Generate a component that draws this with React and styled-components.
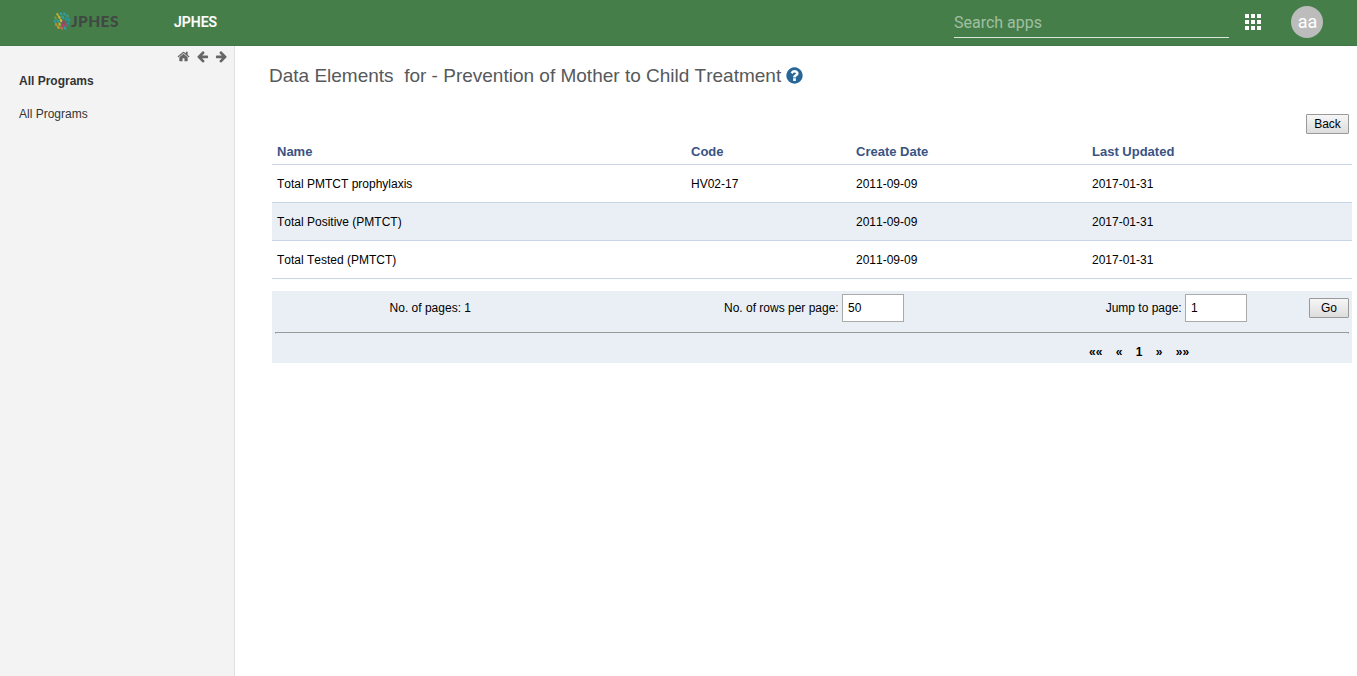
import React from 'react';
import styled, { createGlobalStyle } from 'styled-components';

const GlobalStyle = createGlobalStyle`
  * { box-sizing: border-box; }
  body {
    margin: 0;
    background: #fff;
    color: #000;
    font: 12px/14px "Liberation Sans", Arial, sans-serif;
    font-kerning: none;
  }
`;

const Page = styled.div`
  display: flex;
  flex-direction: column;
  height: 676px;
  overflow: hidden;
`;

const Header = styled.header`
  display: flex;
  flex: none;
  height: 46px;
  padding-left: 53px;
  background: #467e4a;
  border-bottom: 1px solid #41764a;
  font-family: Roboto, sans-serif;
  font-kerning: auto;
  color: #fff;
`;

const Brand = styled.div`
  display: flex;
  width: 121px;
  padding-top: 12px;
`;

const BrandName = styled.span`
  margin-left: 0;
  font: 900 15.5px/18px Lato, sans-serif;
  letter-spacing: 0.4px;
  color: #414843;
`;

const HeaderTitle = styled.div`
  width: 780px;
  font-size: 14px;
  font-weight: 500;
  line-height: 44px;
  -webkit-text-stroke: 0.2px #fff;
`;

const Search = styled.div`
  width: 275px;
  height: 38px;
  padding-top: 7px;
  border-bottom: 1px solid #dbe7dc;
  font-size: 16px;
  line-height: 31px;
  color: #a0c0a2;
`;

const AppsGrid = styled.svg`
  margin: 14px 30px 0 16px;
`;

const Avatar = styled.div`
  width: 32px;
  height: 32px;
  margin-top: 6px;
  border-radius: 50%;
  background: #bcbcbc;
  font-size: 18px;
  line-height: 32px;
  text-align: center;
  text-indent: 1px;
`;

const Body = styled.div`
  display: flex;
  flex: 1;
`;

const Sidebar = styled.aside`
  width: 235px;
  background: #f3f3f3;
  border-right: 1px solid #e0e0e0;
`;

const SidebarTools = styled.div`
  display: flex;
  justify-content: flex-end;
  gap: 6px;
  padding: 4px 6px 0 0;
`;

const SidebarItem = styled.div`
  padding-left: 19px;
  margin-top: ${(p) => (p.$heading ? 11 : 19)}px;
  font-weight: ${(p) => (p.$heading ? 'bold' : 'normal')};
  color: #333;
`;

const Main = styled.main`
  flex: 1;
  padding: 18px 5px 0 37px;
`;

const Title = styled.h1`
  display: flex;
  align-items: center;
  gap: 4px;
  height: 23px;
  margin: 0 0 0 -3px;
  font-size: 19px;
  font-weight: normal;
  white-space: pre;
  color: #55595c;
`;

const Actions = styled.div`
  display: flex;
  justify-content: flex-end;
  padding: 27px 3px 5px 0;
`;

const Button = styled.button`
  width: ${(p) => p.$width}px;
  height: 20px;
  padding: 0;
  border: 1px solid #999;
  border-radius: 1px;
  background: linear-gradient(#f6f6f6, #dddddd);
  font: 12px/17px "Liberation Sans", Arial, sans-serif;
  color: #000;
`;

const Table = styled.table`
  width: 1080px;
  table-layout: fixed;
  border-collapse: separate;
  border-spacing: 0;
`;

const HeadCell = styled.th`
  width: ${(p) => p.$width}px;
  height: 26px;
  padding: 0 5px;
  border-bottom: 1px solid #c8d5e6;
  font-size: 13px;
  text-align: left;
  color: #3a5383;
`;

const Row = styled.tr`
  background: ${(p) => (p.$shaded ? '#eaeff6' : '#fff')};
`;

const Cell = styled.td`
  height: 38px;
  padding: 0 5px;
  border-bottom: 1px solid #c8d5e6;
`;

const Paging = styled.section`
  height: 72px;
  margin-top: 12px;
  padding: 3px 3px 0;
  background: #eaeff6;
`;

const PagingControls = styled.div`
  display: flex;
  align-items: center;
  height: 28px;
`;

const PageCount = styled.div`
  width: 335px;
  padding-left: 114.6px;
`;

const Field = styled.label`
  display: flex;
  align-items: center;
  justify-content: flex-end;
  gap: 3.3px;
  width: ${(p) => p.$width}px;
  white-space: nowrap;
`;

const NumberBox = styled.input`
  width: 62px;
  height: 28px;
  padding: 0 5px;
  border: 1px solid #aaa;
  background: #fff;
  font: 12px "Liberation Sans", Arial, sans-serif;
  color: #000;
`;

const GoSlot = styled.div`
  margin-left: auto;
`;

const Rule = styled.hr`
  height: 2px;
  margin: 10px 0 0;
  border: 1px solid #999;
  border-bottom-color: #eaeff6;
`;

const PageLinks = styled.nav`
  display: flex;
  gap: 13.33px;
  padding: 11px 0 0 814px;
  font-weight: bold;
`;

const iconPaths = {
  home: 'M1472 992v480q0 26-19 45t-45 19h-384v-384h-256v384h-384q-26 0-45-19t-19-45v-480q0-1 .5-3t.5-3l575-474 575 474q1 2 1 6zm223-69l-62 74q-8 9-21 11h-3q-13 0-21-7l-692-577-692 577q-12 8-24 7-13-2-21-11l-62-74q-8-10-7-23.5t11-21.5l719-599q32-26 76-26t76 26l244 204v-195q0-14 9-23t23-9h192q14 0 23 9t9 23v408l219 182q10 8 11 21.5t-7 23.5z',
  left: 'M1664 896v128q0 53-32.5 90.5t-84.5 37.5h-704l293 294q38 36 38 90t-38 90l-75 76q-37 37-90 37-52 0-91-37l-651-652q-37-37-37-90 0-52 37-91l651-650q38-38 91-38 52 0 90 38l75 74q38 38 38 91t-38 91l-293 293h704q52 0 84.5 37.5t32.5 90.5z',
  help: 'M1024 1376v-192q0-14-9-23t-23-9h-192q-14 0-23 9t-9 23v192q0 14 9 23t23 9h192q14 0 23-9t9-23zm256-672q0-88-55.5-163t-138.5-116-170-41q-243 0-371 213-15 24 8 42l132 100q7 6 19 6 16 0 25-12 53-68 86-92 34-24 86-24 48 0 85.5 26t37.5 59q0 38-20 61t-68 45q-63 28-115.5 86.5t-52.5 125.5v36q0 14 9 23t23 9h192q14 0 23-9t9-23q0-19 21.5-49.5t54.5-49.5q32-18 49-28.5t46-35 44.5-48 28-60.5 12.5-81zm384 192q0 209-103 385.5t-279.5 279.5-385.5 103-385.5-103-279.5-279.5-103-385.5 103-385.5 279.5-279.5 385.5-103 385.5 103 279.5 279.5 103 385.5z',
};

const Icon = ({ name, size, color, flip }) => (
  <svg width={size} height={size} viewBox="0 0 1792 1792" fill={color}>
    <path d={iconPaths[name]} transform={flip ? 'translate(1792 0) scale(-1 1)' : undefined} />
  </svg>
);

const logoDots = [
  [4.5, 2.5, '#b3a63a'], [8, 1.6, '#2f9aa0'], [11.5, 2, '#2f9aa0'], [14.5, 4, '#3a9a86'],
  [2.5, 6, '#6f9a45'], [6.3, 5.2, '#c7b436'], [9.8, 5.2, '#2a9fae'], [13, 7, '#2496a8'],
  [16, 8, '#2a97a0'], [1.8, 9.5, '#2f9a9a'], [4.8, 9, '#2a9fae'], [8, 8.6, '#d0b72f'],
  [10.6, 10.4, '#b3307c'], [15, 11.5, '#2b8f99'], [3.2, 12.6, '#bf8a36'], [6.6, 12.2, '#a8b934'],
  [9.3, 13.2, '#b83a7a'], [12.6, 13.2, '#a44a6c'], [5.4, 15.3, '#c29b35'], [8.6, 16.2, '#c46a45'],
  [12, 16.2, '#2a9fae'],
];

const LogoMark = () => (
  <svg width="18" height="18" viewBox="0 0 18 18">
    {logoDots.map(([x, y, color]) => (
      <ellipse key={`${x}-${y}`} cx={x} cy={y} rx="1.25" ry="1.8" fill={color} transform={`rotate(-28 ${x} ${y})`} />
    ))}
  </svg>
);

const columns = [['Name', 414], ['Code', 165], ['Create Date', 236], ['Last Updated', 265]];

const rows = [
  ['Total PMTCT prophylaxis', 'HV02-17', '2011-09-09', '2017-01-31'],
  ['Total Positive (PMTCT)', '', '2011-09-09', '2017-01-31'],
  ['Total Tested (PMTCT)', '', '2011-09-09', '2017-01-31'],
];

export default function App() {
  return (
    <Page>
      <GlobalStyle />
      <Header>
        <Brand>
          <LogoMark />
          <BrandName>JPHES</BrandName>
        </Brand>
        <HeaderTitle>JPHES</HeaderTitle>
        <Search>Search apps</Search>
        <AppsGrid width="16" height="16" viewBox="0 0 16 16" fill="#fff">
          {[0, 6, 12].map((y) => [0, 6, 12].map((x) => (
            <rect key={`${x}-${y}`} x={x} y={y} width="4" height="4" />
          )))}
        </AppsGrid>
        <Avatar>aa</Avatar>
      </Header>
      <Body>
        <Sidebar>
          <SidebarTools>
            <Icon name="home" size={13} color="#666" />
            <Icon name="left" size={13} color="#666" />
            <Icon name="left" size={13} color="#666" flip />
          </SidebarTools>
          <SidebarItem $heading>All Programs</SidebarItem>
          <SidebarItem>All Programs</SidebarItem>
        </Sidebar>
        <Main>
          <Title>
            {'Data Elements  for - Prevention of Mother to Child Treatment'}
            <Icon name="help" size={19} color="#276696" />
          </Title>
          <Actions>
            <Button $width={43}>Back</Button>
          </Actions>
          <Table>
            <thead>
              <tr>
                {columns.map(([label, width]) => (
                  <HeadCell key={label} $width={width}>{label}</HeadCell>
                ))}
              </tr>
            </thead>
            <tbody>
              {rows.map((cells, i) => (
                <Row key={cells[0]} $shaded={i % 2 === 1}>
                  {cells.map((text, c) => <Cell key={c}>{text}</Cell>)}
                </Row>
              ))}
            </tbody>
          </Table>
          <Paging>
            <PagingControls>
              <PageCount>No. of pages: 1</PageCount>
              <Field $width={294}>
                No. of rows per page:
                <NumberBox defaultValue="50" />
              </Field>
              <Field $width={343}>
                Jump to page:
                <NumberBox defaultValue="1" />
              </Field>
              <GoSlot>
                <Button $width={40}>Go</Button>
              </GoSlot>
            </PagingControls>
            <Rule />
            <PageLinks>
              <span>««</span>
              <span>«</span>
              <span>1</span>
              <span>»</span>
              <span>»»</span>
            </PageLinks>
          </Paging>
        </Main>
      </Body>
    </Page>
  );
}
